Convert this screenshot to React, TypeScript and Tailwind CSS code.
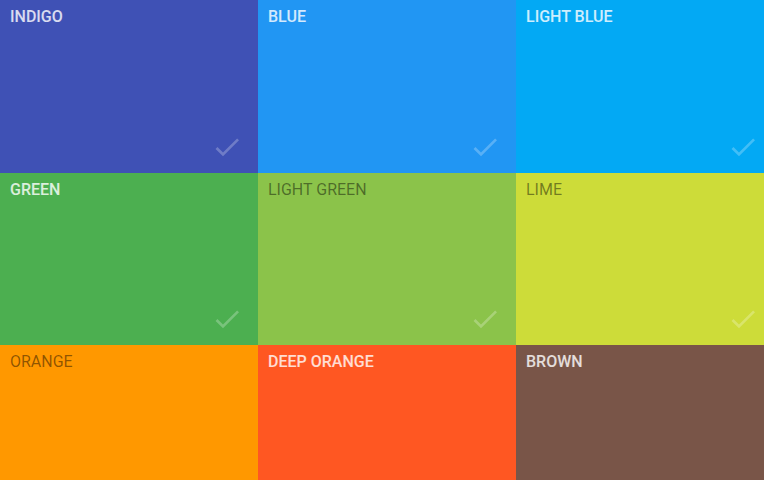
const colors = [
  { name: "Indigo", bg: "bg-[#3f51b5]", dark: false },
  { name: "Blue", bg: "bg-[#2196f3]", dark: false },
  { name: "Light Blue", bg: "bg-[#03a9f4]", dark: false },
  { name: "Green", bg: "bg-[#4caf50]", dark: false },
  { name: "Light Green", bg: "bg-[#8bc34a]", dark: true },
  { name: "Lime", bg: "bg-[#cddc39]", dark: true },
  { name: "Orange", bg: "bg-[#ff9800]", dark: true },
  { name: "Deep Orange", bg: "bg-[#ff5722]", dark: false },
  { name: "Brown", bg: "bg-[#795548]", dark: false },
]

const Check = () => (
  <svg viewBox="0 0 24 24" className="w-8 h-8 fill-white/25">
    <path d="M9 16.17L4.83 12l-1.42 1.41L9 19 21 7l-1.41-1.41z" />
  </svg>
)

const App = () => {
  return (
    <div className="w-[764px] h-[480px] overflow-hidden bg-white" style={{ fontFamily: "Roboto, 'Liberation Sans', sans-serif" }}>
      <div className="grid grid-cols-[258px_258px_258px] w-[774px]">
        {colors.map((c) => (
          <div key={c.name} className={`${c.bg} h-[172.5px] flex flex-col justify-between pl-2.5 pt-[7px] pr-[15px] pb-[10px]`}>
            <p className={`text-base leading-[19px] uppercase ${c.dark ? "text-black/45" : "text-white/80 font-medium"}`}>{c.name}</p>
            <div className="flex justify-end">
              <Check />
            </div>
          </div>
        ))}
      </div>
    </div>
  )
}

export default App
